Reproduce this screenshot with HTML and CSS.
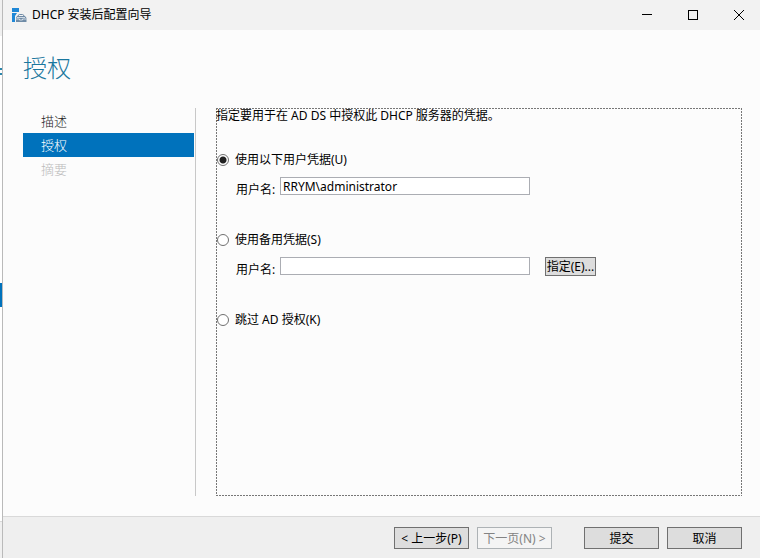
FILE: index.html
```html
<!DOCTYPE html>
<html lang="zh-CN">
<head>
    <meta charset="UTF-8">
    <meta name="viewport" content="width=device-width, initial-scale=1.0">
    <title>DHCP 安装后配置向导</title>
    <link rel="stylesheet" href="styles.css">
</head>
<body>

    <!-- 后方窗口露出的边缘 -->
    <div class="backdrop"></div>

    <div class="window">
        <header class="titlebar">
            <svg class="app-icon" width="15" height="15" viewBox="0 0 15 15">
                <path fill="#1f87d6" d="M0 0h7v4H0zM0 5h5L3 8v6H0z"/>
                <path fill="none" stroke="#6f8ba6" d="M6 8.500q0-2 1.500-2h3q1.500 0 1.500 2"/>
                <path fill="#6f8ba6" d="M5 8h8l1.500 2v4H4v-4z"/>
                <path fill="none" stroke="#e8eef3" stroke-width=".8" d="M5 9.500h8M4 11h3.500v1h3v-1h4"/>
            </svg>
            <span class="title">DHCP 安装后配置向导</span>
            <button class="win-btn" type="button" aria-label="最小化">
                <svg width="10" height="10" viewBox="0 0 10 10"><path d="M0 4.500h10"/></svg>
            </button>
            <button class="win-btn" type="button" aria-label="最大化">
                <svg width="10" height="10" viewBox="0 0 10 10"><rect x="0.500" y="0.500" width="9" height="9"/></svg>
            </button>
            <button class="win-btn" type="button" aria-label="关闭">
                <svg width="10" height="10" viewBox="0 0 10 10"><path d="M0 0l10 10M10 0L0 10"/></svg>
            </button>
        </header>

        <h1>授权</h1>

        <div class="content">
            <nav class="steps">
                <a class="step" href="#">描述</a>
                <a class="step active" href="#">授权</a>
                <a class="step disabled" href="#" aria-disabled="true">摘要</a>
            </nav>

            <form class="panel" id="authForm">
                <p class="intro">指定要用于在 AD DS 中授权此 DHCP 服务器的凭据。</p>

                <div class="option">
                    <label class="choice"><input type="radio" name="auth" checked>使用以下用户凭据(U)</label>
                    <div class="field">
                        <label for="user">用户名:</label>
                        <input class="text" type="text" id="user" value="RRYM\administrator">
                    </div>
                </div>

                <div class="option">
                    <label class="choice"><input type="radio" name="auth">使用备用凭据(S)</label>
                    <div class="field">
                        <label for="altUser">用户名:</label>
                        <input class="text" type="text" id="altUser">
                        <button class="btn btn-small" type="button">指定(E)...</button>
                    </div>
                </div>

                <div class="option">
                    <label class="choice"><input type="radio" name="auth">跳过 AD 授权(K)</label>
                </div>
            </form>
        </div>

        <footer class="actions">
            <div class="group">
                <button class="btn" type="button">&lt; 上一步(P)</button>
                <button class="btn" type="button" disabled>下一页(N) &gt;</button>
            </div>
            <div class="group">
                <button class="btn" type="submit" form="authForm">提交</button>
                <button class="btn" type="button">取消</button>
            </div>
        </footer>
    </div>

</body>
</html>
```

FILE: styles.css
```css
* {
    box-sizing: border-box;
}

body {
    margin: 0;
    display: flex;
    min-height: 100vh;
    font-family: "Noto Sans", "Noto Sans CJK SC", sans-serif;
    font-size: 12px;
    line-height: 16px;
    color: #000;
}

button,
input {
    font: inherit;
    color: inherit;
}

.backdrop {
    width: 2px;
    background: linear-gradient(#f0f0f0 36px, #fff 36px, #fff 68px, #2a86ac 68px, #2a86ac 70px, #fff 70px, #fff 73px, #2a86ac 73px, #2a86ac 75px, #fff 75px, #fff 283px, #0072bc 283px, #0072bc 307px, #fff 307px, #fff 521px, #d9d9d9 521px, #d9d9d9 522px, #f0f0f0 522px);
}

.window {
    flex: 1;
    display: flex;
    flex-direction: column;
    border-left: 1px solid #bababa;
    background: #fcfcfc;
}

.titlebar {
    display: flex;
    align-items: center;
    gap: 4px;
    height: 30px;
    padding-left: 9px;
    background: #f2f2f2;
}

.title {
    flex: 1;
    padding-left: 1px;
}

.win-btn {
    display: flex;
    align-items: center;
    justify-content: center;
    width: 42px;
    height: 28px;
    padding: 0;
    border: none;
    background: transparent;
}

.win-btn svg {
    fill: none;
    stroke: #000;
}

h1 {
    margin: 20px 20px 22px;
    font-size: 24px;
    font-weight: 300;
    line-height: 36px;
    color: #1a779e;
}

.content {
    flex: 1;
    display: flex;
    padding: 0 18px 20px 20px;
}

.steps {
    width: 173px;
    padding: 1px 1px 0 0;
    border-right: 1px solid #c8c8c8;
}

.step {
    display: block;
    height: 24px;
    padding-left: 18px;
    font-size: 13px;
    font-weight: 300;
    line-height: 24px;
    color: #222;
    text-decoration: none;
}

.step.active {
    background: #0072bc;
    color: #fff;
}

.step.disabled {
    color: #bbb;
}

/* 虚线边框: 2px 实 + 1px 空 */
.panel {
    flex: 1;
    margin-left: 20px;
    background:
        repeating-linear-gradient(90deg, #777 0 2px, transparent 2px 3px) top / 100% 1px no-repeat,
        repeating-linear-gradient(90deg, #777 0 2px, transparent 2px 3px) bottom / 100% 1px no-repeat,
        repeating-linear-gradient(#777 0 2px, transparent 2px 3px) left / 1px 100% no-repeat,
        repeating-linear-gradient(#777 0 2px, transparent 2px 3px) right / 1px 100% no-repeat;
}

.intro {
    margin: 0 0 28px;
}

.option {
    min-height: 80px;
}

.choice {
    display: flex;
    align-items: center;
    gap: 6px;
}

.choice input {
    appearance: none;
    width: 12px;
    height: 12px;
    margin: 0 0 0 1px;
    border: 1px solid #707070;
    border-radius: 50%;
    background: #fff;
}

.choice input:checked {
    background: radial-gradient(circle, #212121 2px, #212121 3px, #fff 4px);
}

.field {
    display: flex;
    align-items: flex-start;
    margin-top: 9px;
    padding-left: 20px;
}

.field label {
    width: 44px;
    padding-top: 5px;
    white-space: nowrap;
}

.text {
    width: 250px;
    height: 18px;
    padding: 0 2px;
    border: 1px solid #abadb3;
    background: #fff;
}

.btn {
    width: 75px;
    height: 22px;
    padding: 1px 0 0;
    border: 1px solid #707070;
    background: #ddd;
    line-height: 20px;
    white-space: nowrap;
}

.btn:disabled {
    border-color: #adb2b5;
    background: #f4f4f4;
    color: #838383;
}

.btn-small {
    width: 51px;
    height: 19px;
    margin-left: 15px;
    padding: 0;
    line-height: 17px;
}

.actions {
    display: flex;
    justify-content: flex-end;
    gap: 32px;
    padding: 10px 18px 9px;
    border-top: 1px solid #d9d9d9;
    background: #efefef;
}

.group {
    display: flex;
    gap: 8px;
}
```
